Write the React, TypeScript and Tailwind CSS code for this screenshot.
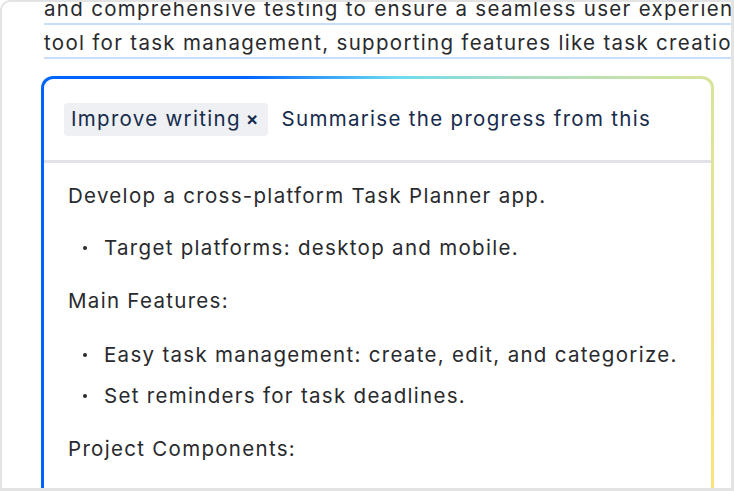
export default function App() {
  return (
    <div className="w-[734px] h-[491px] overflow-hidden bg-white border-t-2 border-l-2 border-r-[3px] border-b-[3px] border-[#e3e3e3] rounded-tl-[10px] font-['Inter','Liberation_Sans',sans-serif] tracking-[1.3px] text-[#292a2e]">
      {/* previous paragraph, highlighted */}
      <div className="pl-[42px] -mt-[7px] text-[20.5px]">
        <div className="leading-[28px] whitespace-nowrap border-b-2 border-[#c8dcfb] mb-[4px]">
          and comprehensive testing to ensure a seamless user experience
        </div>
        <div className="leading-[28px] whitespace-nowrap border-b-2 border-[#c8dcfb]">
          tool for task management, supporting features like task creation
        </div>
      </div>

      {/* AI prompt box */}
      <div className="ml-[39px] mt-[17px] w-[673px] h-[430px] rounded-[12px] p-[3px] bg-[linear-gradient(110deg,#0065ff_0%,#0065ff_25%,#6cdcf0_43%,#a6dcc4_56%,#d6e49c_80%,#fde27c_100%)]">
        <div className="h-full rounded-[9px] bg-white flex flex-col">
          <div className="h-[81px] flex items-center px-5 gap-[14px] text-[20.5px] text-[#172b4d] whitespace-nowrap">
            <span className="h-[33px] flex items-center gap-[5px] pl-[7px] pr-[9px] rounded-[4px] bg-[#eef0f3]">
              Improve writing
              <span className="text-[19px] font-semibold tracking-normal">×</span>
            </span>
            <span>Summarise the progress from this</span>
          </div>
          <div className="h-[3px] bg-[#e2e3e8]" />
          <div className="pt-[19px] pl-6 text-[20.5px] leading-[28px] whitespace-nowrap">
            <p>Develop a cross-platform Task Planner app.</p>
            <ul className="mt-6">
              <li className="flex items-center pl-[15px] gap-[17px]">
                <span className="w-1 h-1 rounded-full bg-[#292a2e]" />
                Target platforms: desktop and mobile.
              </li>
            </ul>
            <p className="mt-[25px]">Main Features:</p>
            <ul className="mt-[26px] flex flex-col gap-[13px]">
              <li className="flex items-center pl-[15px] gap-[17px]">
                <span className="w-1 h-1 rounded-full bg-[#292a2e]" />
                Easy task management: create, edit, and categorize.
              </li>
              <li className="flex items-center pl-[15px] gap-[17px]">
                <span className="w-1 h-1 rounded-full bg-[#292a2e]" />
                Set reminders for task deadlines.
              </li>
            </ul>
            <p className="mt-[25px]">Project Components:</p>
          </div>
        </div>
      </div>
    </div>
  );
}
